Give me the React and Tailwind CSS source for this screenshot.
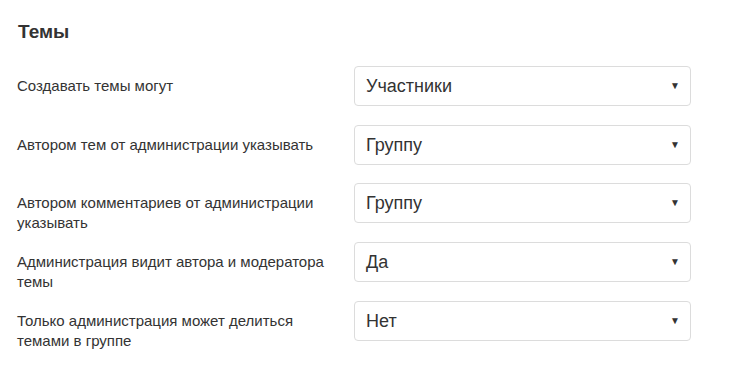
import React from "react";

const rows = [
  { label: "Создавать темы могут", value: "Участники", mt: "mt-[20px]" },
  { label: "Автором тем от администрации указывать", value: "Группу", mt: "mt-[19px]" },
  { label: "Автором комментариев от администрации указывать", value: "Группу", mt: "mt-[18px]" },
  { label: "Администрация видит автора и модератора темы", value: "Да", mt: "mt-[19px]" },
  { label: "Только администрация может делиться темами в группе", value: "Нет", mt: "mt-[19px]" },
];

const SelectBox = ({ value }) => (
  <div className="w-[337px] h-[40px] shrink-0 flex items-center justify-between border border-[#dcdcdc] rounded-[4px] bg-white pl-[11px] pr-[10px]">
    <span className="text-[18px] text-[#333]">{value}</span>
    <span className="text-[10px] text-[#333] leading-none">▼</span>
  </div>
);

export default function App() {
  return (
    <div className="w-[732px] h-[367px] bg-white pl-[17px] pt-[18px] font-['Liberation_Sans',Arial,sans-serif] text-[#333]">
      <h2 className="text-[19px] leading-[28px] font-bold pl-[1px]">Темы</h2>

      {rows.map((row, i) => (
        <div key={i} className={`flex h-[40px] ${row.mt}`}>
          <div className="w-[337px] pr-[20px] pt-[10px] text-[15px] leading-[20px]">
            {row.label}
          </div>
          <SelectBox value={row.value} />
        </div>
      ))}
    </div>
  );
}
